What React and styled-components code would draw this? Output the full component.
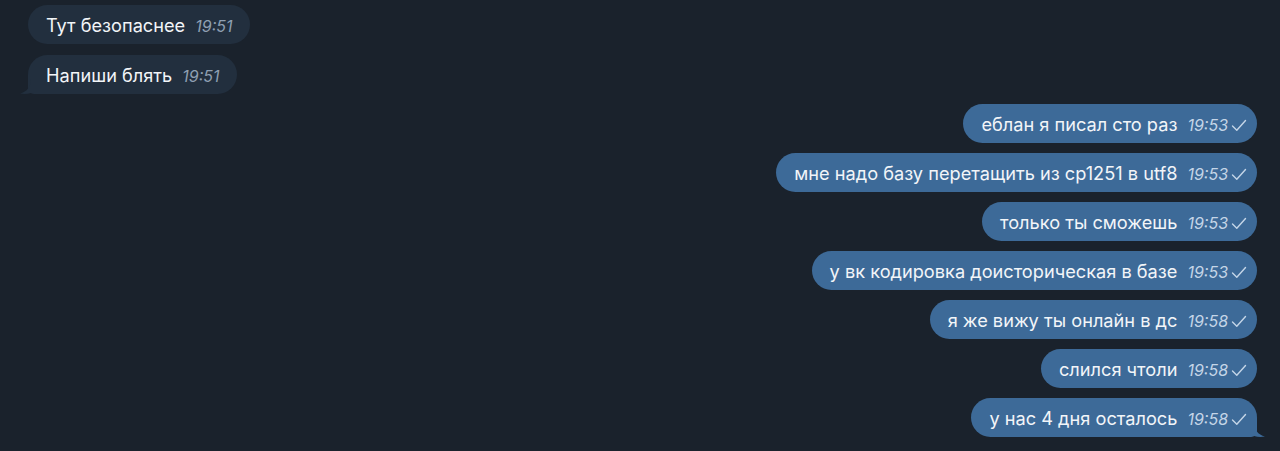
import React from 'react'
import styled, {createGlobalStyle} from 'styled-components'

const Global = createGlobalStyle`
html, body {
  margin: 0;
  padding: 0;
  background: #1a222c;
}
body {
  font-family: Inter, "Noto Sans", sans-serif;
  -webkit-font-smoothing: antialiased;
}
`

const Chat = styled.div`
width: 1280px;
height: 451px;
overflow: hidden;
background: #1a222c;
display: flex;
flex-direction: column;
gap: 10px;
padding: 5px 23px 0 28px;
box-sizing: border-box;
`

const Row = styled.div`
display: flex;
justify-content: ${({out}) => (out ? 'flex-end' : 'flex-start')};
margin-top: ${({extra}) => extra || 0}px;
`

const Bubble = styled.div`
position: relative;
height: 39px;
box-sizing: border-box;
display: flex;
align-items: center;
padding: 0 ${({out}) => (out ? '10px' : '18px')} 0 18px;
border-radius: 20px;
background: ${({out}) => (out ? '#3d6a98' : '#222f3e')};
color: #f2f5f8;
font-size: 18.2px;
letter-spacing: 0;
${({tail, out}) => tail && (out ? 'border-bottom-right-radius: 6px;' : 'border-bottom-left-radius: 6px;')}
`

const Tail = styled.svg`
position: absolute;
bottom: 0;
width: 11px;
height: 15px;
${({out}) => (out ? 'right: -8px;' : 'left: -8px; transform: scaleX(-1);')}
`

const Meta = styled.span`
display: inline-flex;
align-items: center;
margin-left: 10px;
margin-top: 3px;
font-size: 16px;
font-style: italic;
color: ${({out}) => (out ? '#c4d5e7' : '#8e9fb2')};
`

const Check = styled.svg`
width: 16px;
height: 13px;
margin-left: 3px;
`

const messages = [
  {text: 'Тут безопаснее', time: '19:51'},
  {text: 'Напиши блять', time: '19:51', tail: true},
  {text: 'еблан я писал сто раз', time: '19:53', out: true},
  {text: 'мне надо базу перетащить из cp1251 в utf8', time: '19:53', out: true},
  {text: 'только ты сможешь', time: '19:53', out: true},
  {text: 'у вк кодировка доисторическая в базе', time: '19:53', out: true},
  {text: 'я же вижу ты онлайн в дс', time: '19:58', out: true},
  {text: 'слился чтоли', time: '19:58', out: true},
  {text: 'у нас 4 дня осталось', time: '19:58', out: true, tail: true},
]

function Message({text, time, out, tail}) {
  return (
    <Bubble out={out} tail={tail}>
      {text}
      <Meta out={out}>
        {time}
        {out && (
          <Check viewBox="0 0 16 13">
            <path d="M1.5 7 L5.8 11.3 L14.5 1.5" fill="none" stroke="#c4d5e7" strokeWidth="1.4" strokeLinecap="round" strokeLinejoin="round" />
          </Check>
        )}
      </Meta>
      {tail && (
        <Tail out={out} viewBox="0 0 11 15">
          <path d="M0 0 C0 8 4 12.5 11 14.6 C7 15.2 3 15 0 14 Z" fill={out ? '#3d6a98' : '#222f3e'} />
        </Tail>
      )}
    </Bubble>
  )
}

function App() {
  return (
    <>
      <Global />
      <Chat>
        {messages.map((m, i) => (
          <Row key={i} out={m.out} extra={i === 1 ? 1 : 0}>
            <Message {...m} />
          </Row>
        ))}
      </Chat>
    </>
  )
}

export default App
